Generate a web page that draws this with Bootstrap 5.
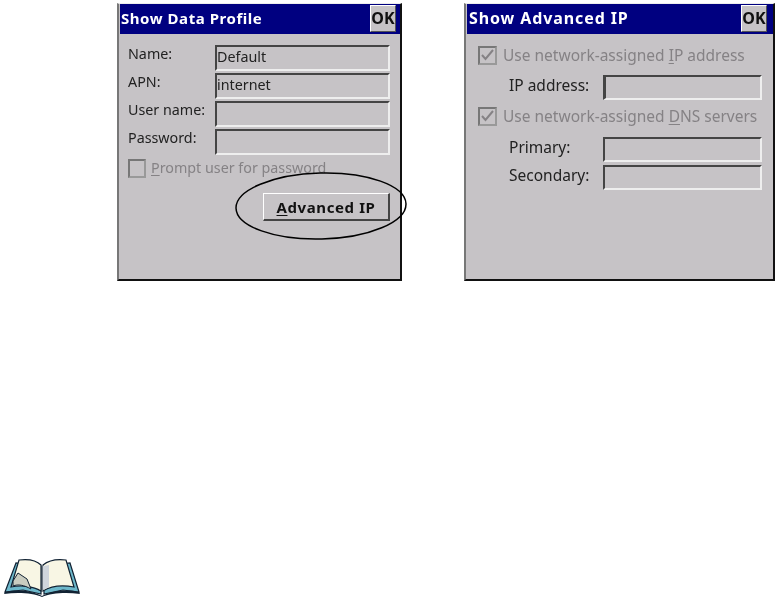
<!DOCTYPE html>
<html lang="en">
<head>
<meta charset="utf-8">
<title>Dialogs</title>
<link href="https://cdn.jsdelivr.net/npm/bootstrap@5.3.0/dist/css/bootstrap.min.css" rel="stylesheet">
<style>
html,body{height:597px;overflow:hidden;background:#fff}
body{font-family:"Noto Sans","Liberation Sans",sans-serif;font-size:14.3px;color:#222;line-height:1}
.sheet{height:597px;padding-top:3px}
.shots{padding-left:117px;gap:62px}
.dlg{background:#c6c3c6;border-top:1px solid #eee;border-left:2px solid #777;border-right:2px solid #111;border-bottom:2px solid #111;height:278px;position:relative;filter:blur(.5px)}
.dlg-a{width:285px}
.dlg-b{width:311px;font-size:15.5px}
.ttl{background:#000080;color:#fff;height:30px;margin:0 0 0 1px;font:700 15px "Noto Sans",sans-serif;letter-spacing:.55px;padding:0 2px 2px 1px}
.dlg-b .ttl{font-size:16px;letter-spacing:.9px;padding-left:2px}
.okb{width:26px;height:27px;background:#c6c3c6;color:#111;border-top:1px solid #fff;border-left:1px solid #fff;border-right:1px solid #555;border-bottom:1px solid #555;font:700 16px "Noto Sans",sans-serif;letter-spacing:0;padding:0}
.dlg-a .okb{margin-right:2px}
.dlg-b .okb{margin-right:4px}
.rows-a{padding:11px 0 0 9px;gap:2px}
.rowf{height:26px}
.lab-a{width:87px;padding-bottom:7px}
.fld{background:#c6c3c6;border-top:2px solid #444;border-left:2px solid #444;border-right:2px solid #eee;border-bottom:2px solid #eee;width:175px;height:26px;padding:3px 0 0 0}
.chk{width:19px;height:19px;border:2px solid #777;border-right-color:#999;border-bottom-color:#999;flex:none}
.off{color:#858285}
.key{text-decoration:underline;text-underline-offset:2px}
.chk-a{margin:4px 0 0 9px;gap:5px;height:19px}
.chk-a .chk{width:18px}
.btn-wrap{padding:15px 10px 0 0}
.adv{width:127px;height:28px;background:#c6c3c6;border-top:1px solid #fff;border-left:1px solid #fff;border-right:2px solid #444;border-bottom:2px solid #444;font:700 15px "Noto Sans",sans-serif;letter-spacing:.6px;color:#111;padding:0}
.oval{position:absolute;left:116px;top:168px;width:172px;height:68px;overflow:visible}
.rows-b{padding:12px 0 0 12px}
.chk-b{gap:6px;height:19px}
.rowg{height:25px;padding-left:31px;margin-top:11px}
.rowg.next{margin-top:3px}
.lab-b{width:94px;padding-bottom:3px}
.rowg .fld{width:159px;height:25px}
.rowg .fld.wide-l{border-left-width:3px}
.chk-b.two{margin-top:7px}
.rowg.first{margin-top:10px}
.bookmark{margin:auto 0 0 3px;height:40px;width:78px}
</style>
</head>
<body>
<div class="sheet d-flex flex-column">
  <div class="shots d-flex">
    <div class="dlg dlg-a">
      <div class="ttl d-flex align-items-center justify-content-between"><span>Show Data Profile</span><button class="okb" type="button">OK</button></div>
      <div class="rows-a d-flex flex-column">
        <div class="rowf d-flex align-items-center"><span class="lab-a">Name:</span><div class="fld">Default</div></div>
        <div class="rowf d-flex align-items-center"><span class="lab-a">APN:</span><div class="fld">internet</div></div>
        <div class="rowf d-flex align-items-center"><span class="lab-a">User name:</span><div class="fld"></div></div>
        <div class="rowf d-flex align-items-center"><span class="lab-a">Password:</span><div class="fld"></div></div>
      </div>
      <div class="chk-a d-flex align-items-center off"><span class="chk"></span><span><span class="key">P</span>rompt user for password</span></div>
      <div class="btn-wrap d-flex justify-content-end"><button class="adv" type="button"><span class="key">A</span>dvanced IP</button></div>
      <svg class="oval" viewBox="0 0 172 68" aria-hidden="true"><ellipse cx="86" cy="34" rx="85" ry="33" transform="rotate(-1.5 86 34)" fill="none" stroke="#000" stroke-width="1.5"/></svg>
    </div>
    <div class="dlg dlg-b">
      <div class="ttl d-flex align-items-center justify-content-between"><span>Show Advanced IP</span><button class="okb" type="button">OK</button></div>
      <div class="rows-b d-flex flex-column">
        <div class="chk-b d-flex align-items-center off"><span class="chk"><svg width="15" height="15" viewBox="0 0 15 15" class="d-block"><path d="M2 7l3.5 4L13 2" fill="none" stroke="#858285" stroke-width="2"/></svg></span><span>Use network-assigned <span class="key">I</span>P address</span></div>
        <div class="rowg first d-flex align-items-center"><span class="lab-b">IP address:</span><div class="fld wide-l"></div></div>
        <div class="chk-b two d-flex align-items-center off"><span class="chk"><svg width="15" height="15" viewBox="0 0 15 15" class="d-block"><path d="M2 7l3.5 4L13 2" fill="none" stroke="#858285" stroke-width="2"/></svg></span><span>Use network-assigned <span class="key">D</span>NS servers</span></div>
        <div class="rowg d-flex align-items-center"><span class="lab-b">Primary:</span><div class="fld"></div></div>
        <div class="rowg next d-flex align-items-center"><span class="lab-b">Secondary:</span><div class="fld"></div></div>
      </div>
    </div>
  </div>
  <svg class="bookmark" viewBox="0 0 78 40" aria-hidden="true">
    <path d="M2 35L13 6 38 9 38 37 20 33Z" fill="#6db8cb" stroke="#123" stroke-width="1.2"/>
    <path d="M76 35L67 6 41 9 41 37 60 33Z" fill="#6db8cb" stroke="#123" stroke-width="1.2"/>
    <path d="M8 30L16 3C24 2 33 3 38 8L38 34C30 29 18 28 8 30Z" fill="#f8f6e4" stroke="#123" stroke-width="1.2"/>
    <path d="M71 30L63 3C55 2 46 3 40 8L40 34C48 29 60 28 71 30Z" fill="#f8f6e4" stroke="#123" stroke-width="1.2"/>
    <path d="M10 24L15 16 24 22 28 32C21 28 15 27 10 29Z" fill="#c9ccc0" stroke="#123" stroke-width="1"/>
    <path d="M40 9L46 8 46 30 40 33Z" fill="#cfd5dc"/>
    <path d="M2 35C15 32 30 34 39 39 48 34 63 32 76 35L77 37C63 35 48 36 39 40 30 36 15 35 1 37Z" fill="#123"/>
  </svg>
</div>
</body>
</html>
